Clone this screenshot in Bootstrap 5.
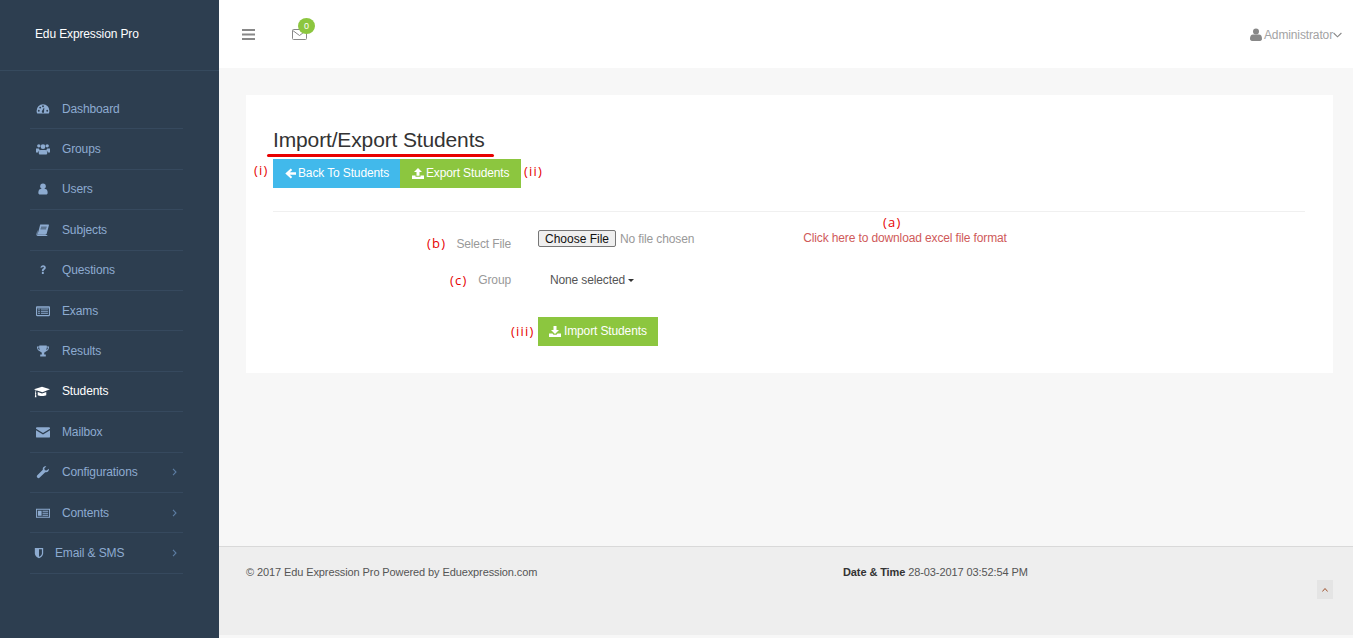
<!DOCTYPE html>
<html lang="en">
<head>
  <meta charset="UTF-8" />
  <meta name="viewport" content="width=device-width, initial-scale=1.0"/>
  <title>Import/Export Students</title>
  <link href="https://cdn.jsdelivr.net/npm/bootstrap@5.3.3/dist/css/bootstrap.min.css" rel="stylesheet"/>
  <style>
    html, body { height: 100%; }
    body { font-family: "Liberation Sans", Arial, sans-serif; font-size: 12px; letter-spacing: -.13px; color: #333; background: #f7f7f7; overflow: hidden; }
    .app-wrap { height: 638px; }
    .side-bar { width: 219px; background: #2d3e50; flex: none; }
    .brand-box { height: 71px; padding: 27px 0 0 35px; color: #fff; font-size: 12px; line-height: 15px; border-bottom: 1px solid #364a5e; }
    .side-menu { margin: 18px 36px 0 30px; padding: 0; list-style: none; }
    .side-menu li { height: 40.4px; border-bottom: 1px solid #36495e; }
    .side-menu a { display: flex; align-items: center; height: 100%; padding-left: 5px; color: #8dabd0; text-decoration: none; line-height: 14px; }
    .side-menu a.is-on { color: #fff; }
    .side-menu svg.mi { width: 14px; height: 14px; flex: none; margin-left: 1px; margin-right: 12px; fill: currentColor; }
    .side-menu a.is-on svg.mi { width: 16px; height: 15px; margin-left: -1px; margin-right: 12px; }
    .side-menu a.short-gap svg.mi { margin-right: 11px; margin-left: -1px; width: 10px; }
    .side-menu .go { margin-left: auto; margin-right: 6px; width: 5px; height: 8px; fill: none; stroke: #5c7da3; stroke-width: 1.1; }
    .top-head { height: 68px; background: #fff; padding: 0 11px 0 23px; color: #888; }
    .menu-ic { width: 13px; height: 11px; fill: #888; }
    .mail-box { margin-left: 37px; width: 15px; height: 11px; margin-top: 1px; }
    .mail-box svg { width: 15px; height: 11px; display: block; }
    .num-pill { position: absolute; top: -11px; left: 6px; width: 17px; height: 16px; border-radius: 50%; background: #8cc63f; color: #fff; font-size: 9px; line-height: 16px; text-align: center; }
    .admin-link { color: #a3a3a3; font-size: 12px; padding-top: 1px; }
    .admin-link svg.who { width: 12px; height: 13px; fill: #888; margin-right: 2px; }
    .admin-link svg.dn { width: 9px; height: 6px; fill: none; stroke: #888; stroke-width: 1.1; }
    .page-area { padding: 27px 20px 0 27px; }
    .white-panel { height: 278px; background: #fff; padding: 32px 28px 0 27px; position: relative; }
    .page-ttl { font-size: 21px; line-height: 26px; font-weight: 400; color: #333; margin: 0 0 6px; letter-spacing: -.14px; }
    .red-line { position: absolute; left: 21px; top: 59px; width: 227px; height: 3px; background: #e80000; border-radius: 2px; }
    .note-red { position: absolute; color: #e60000; line-height: 15px; letter-spacing: 1.2px; font-family: "Open Sans", sans-serif; font-size: 13px; }
    .nt-i { left: 8px; top: 68px; }
    .nt-ii { left: 278px; top: 69px; }
    .nt-a { left: 637px; top: 120px; }
    .nt-b { left: 181px; top: 141px; }
    .nt-c { left: 204px; top: 178px; }
    .nt-iii { left: 265px; top: 229px; }
    .blk-btn { display: inline-flex; align-items: center; height: 29px; border: 0; border-radius: 0; color: #fff; font-size: 12px; line-height: 29px; text-decoration: none; }
    .blk-btn svg { fill: #fff; }
    .btn-sky { background: #41b9eb; width: 127px; padding-left: 12px; }
    .btn-sky svg { width: 11px; height: 11px; margin-right: 2px; }
    .btn-lime { background: #8cc63f; padding-left: 12px; }
    .btn-lime svg { width: 12px; height: 11px; margin-right: 2px; }
    .btn-exp { width: 121px; }
    .btn-imp { width: 120px; margin-left: 27px; padding-left: 11px; }
    .btn-imp svg { margin-right: 3px; }
    .btn-lime:hover, .btn-sky:hover { color: #fff; }
    .thin-rule { border-top: 1px solid #f0f0f0; margin: 23px 0 0; height: 0; }
    .lbl-cell { width: 238px; flex: none; text-align: right; color: #999; }
    .frm-line { display: flex; }
    .row-file { height: 27px; margin-top: 16px; }
    .row-file .lbl-cell { padding-top: 7px; }
    .file-wrap { margin: 2px 0 0 27px; }
    .row-group { height: 20px; margin-top: 16px; }
    .row-import { margin-top: 26px; }
    .file-btn { font-family: "Liberation Sans", Arial, sans-serif; font-size: 12px; letter-spacing: 0; color: #111; background: #efefef; border: 1px solid #767676; border-radius: 2px; height: 17px; width: 78px; padding: 0; line-height: 14px; }
    .file-txt { color: #999; margin-left: 4px; }
    .dl-link { color: #cf5a5a; text-decoration: none; margin-left: 109px; margin-top: -1px; }
    .none-sel { color: #555; margin-left: 39px; }
    .caret-dn { display: inline-block; width: 0; height: 0; border-left: 3px solid transparent; border-right: 3px solid transparent; border-top: 3px solid #333; margin-left: 3px; vertical-align: middle; }
    .foot-bar { height: 89px; background: #eee; border-top: 1px solid #d9d9d9; padding: 18px 0 0 27px; position: relative; color: #555; font-size: 11px; line-height: 14px; margin-top: auto; margin-bottom: 3px; letter-spacing: -.1px; }
    .foot-left { width: 597px; flex: none; }
    .foot-bar b { color: #333; }
    .up-box { position: absolute; right: 20px; top: 33px; width: 16px; height: 19px; background: #e4e4e4; display: flex; align-items: center; justify-content: center; }
    .up-box svg { width: 6px; height: 4px; fill: none; stroke: #a0522d; stroke-width: 1; }
  </style>
</head>
<body>
  <div class="app-wrap d-flex">

    <!-- sidebar -->
    <nav class="side-bar">
      <div class="brand-box">Edu Expression Pro</div>
      <ul class="side-menu">
        <li><a href="#"><svg class="mi" viewBox="0 0 15 14"><path d="M7.5 2A7 7 0 0 0 .6 9.2c0 1 .3 1.9.7 2.6h12.4c.4-.7.7-1.6.7-2.6A7 7 0 0 0 7.500 2zM3 9.900a1 1 0 1 1 0-2 1 1 0 0 1 0 2zm1.500-3.400a1 1 0 1 1 0-2 1 1 0 0 1 0 2zm3-1.400a1 1 0 1 1 0-2 1 1 0 0 1 0 2zm1 5.600a1.300 1.300 0 0 1-2.300-.9l.2-.6 2-3.500.5.1-.3 4zm3.500-.8a1 1 0 1 1 0-2 1 1 0 0 1 0 2z" fill-rule="evenodd"/></svg>Dashboard</a></li>
        <li><a href="#"><svg class="mi" viewBox="0 0 15 14"><circle cx="3" cy="3.600" r="1.800"/><circle cx="12" cy="3.600" r="1.800"/><circle cx="7.500" cy="4.500" r="2.500"/><path d="M0 6.500h3c.3 1 .8 1.500 1.300 1.900-1.200.5-1.800 1.300-2 2.300H0zM15 6.500h-3c-.3 1-.8 1.500-1.300 1.900 1.200.5 1.800 1.300 2 2.300H15zM5 8h5c1.500 0 2 1.500 2 3.500 0 1-.5 1.500-1.500 1.500h-6c-1 0-1.500-.5-1.500-1.500C3 9.500 3.500 8 5 8z"/></svg>Groups</a></li>
        <li><a href="#"><svg class="mi" viewBox="0 0 15 14"><circle cx="7.500" cy="4" r="3"/><path d="M5 7h5c1.500 0 2.500 1.500 2.500 4 0 1.200-.7 2-1.800 2H4.300c-1.100 0-1.800-.8-1.800-2 0-2.500 1-4 2.500-4z"/></svg>Users</a></li>
        <li><a href="#"><svg class="mi" viewBox="0 0 15 14"><path d="M4.500 1H13c.8 0 1 .5.800 1.200l-2.300 8.500c-.2.700-.6 1.300-1.500 1.300H3c-.8 0-1.300-.4-1-1.300zM5.500 3.500h6l-.2.800h-6zM5 5.500h6l-.2.800h-6z" fill-rule="evenodd"/><path d="M1.500 7 .5 11.500c-.2 1 .5 1.800 1.500 1.800h9c.7 0 1.200-.5 1.400-1H2.500c-.7 0-1-.4-.8-1z"/></svg>Subjects</a></li>
        <li><a href="#"><svg class="mi" viewBox="0 0 15 14"><path d="M4.800 4.600C5 2.800 6 1.800 7.700 1.800c1.700 0 2.800 1 2.800 2.500 0 1.300-.7 1.900-1.400 2.400-.6.400-.8.700-.8 1.300H6.300c0-1.200.4-1.900 1.200-2.500.5-.4.900-.7.900-1.300 0-.5-.3-.8-.8-.8s-.8.400-.9 1zM6.300 9h2v2.200h-2z"/></svg>Questions</a></li>
        <li><a href="#"><svg class="mi" viewBox="0 0 15 14"><path d="M1.200 2h12.600c.7 0 1.200.5 1.200 1.200v8.100c0 .7-.5 1.200-1.200 1.200H1.200C.5 12.500 0 12 0 11.300V3.200C0 2.500.5 2 1.200 2zM1.200 3.200v8.100h12.600V3.200zM2.200 4.500h2v1h-2zM5.300 4.500h7.500v1H5.300zM2.200 6.800h2v1h-2zM5.300 6.800h7.500v1H5.300zM2.200 9h2v1h-2zM5.300 9h7.500v1H5.300z" fill-rule="evenodd"/><path d="M1.200 3.200h12.600v1H1.200z"/></svg>Exams</a></li>
        <li><a href="#"><svg class="mi" viewBox="0 0 15 14"><path d="M3.500 1h8v1.300H14c0 3-1.200 4.700-3.500 5.200-.5.700-1 1-1.700 1.200v2h1.700v2.300H4.500v-2.300h1.700v-2c-.7-.2-1.200-.5-1.700-1.200C2.200 7 1 5.300 1 2.300h2.500zM2.200 3.300c.1 1.500.7 2.500 1.800 3-.3-.9-.5-1.900-.5-3zm10.600 0h-1.300c0 1.100-.2 2.100-.5 3 1.100-.5 1.700-1.500 1.800-3z" fill-rule="evenodd"/></svg>Results</a></li>
        <li><a href="#" class="is-on"><svg class="mi" viewBox="0 0 15 14"><path d="M7.500 2.500 0 5l1.600.6C1.400 6.400 1.300 7.200 1.300 8c-.3.2-.4.400-.4.700 0 .2.100.4.300.6l-.4 3h1.500l-.4-3c.2-.2.300-.4.300-.6 0-.3-.1-.5-.4-.7 0-.7.200-1.500.4-2.200l5.700 2L15 5z"/><path d="M3.500 7.500v3c1.200 1 6.800 1 8 0v-3l-4 1.400z"/></svg>Students</a></li>
        <li><a href="#"><svg class="mi" viewBox="0 0 15 14"><path d="M1 2h13c.6 0 1 .4 1 1v.4L7.500 8 0 3.400V3c0-.6.400-1 1-1zM0 5v7c0 .6.400 1 1 1h13c.6 0 1-.4 1-1V5L7.500 9.600z"/></svg>Mailbox</a></li>
        <li><a href="#"><svg class="mi" viewBox="0 0 15 14"><path d="M13.800 3.500c.5 2.300-1.600 4.300-3.900 3.700L4 13c-.8.800-1.900.800-2.600 0s-.7-1.800 0-2.500l5.900-5.800C6.700 2.500 8.700.5 11 1L8.900 3l.5 2 2 .5z"/></svg>Configurations<svg class="go" viewBox="0 0 5 8"><path d="m1 .8 3 3.200-3 3.200"/></svg></a></li>
        <li><a href="#"><svg class="mi" viewBox="0 0 15 14"><path d="M0 2.500h15v9.500H0zM1 3.500V11h13V3.500zM2 4.500h4v5.500H2zM7 4.500h6v1.200H7zM7 6.700h6v1.200H7zM7 8.900h6v1.100H7z" fill-rule="evenodd"/></svg>Contents<svg class="go" viewBox="0 0 5 8"><path d="m1 .8 3 3.200-3 3.200"/></svg></a></li>
        <li><a href="#" class="short-gap"><svg class="mi" viewBox="0 0 12 14"><path d="M1 1h10v6.500c0 2.800-2.700 4.700-5 5.700-2.300-1-5-2.900-5-5.700zM6 2.600v8.900c1.700-.8 3.500-2.200 3.500-4V2.600z" fill-rule="evenodd"/></svg>Email &amp; SMS<svg class="go" viewBox="0 0 5 8"><path d="m1 .8 3 3.200-3 3.200"/></svg></a></li>
      </ul>
    </nav>

    <div class="flex-grow-1 d-flex flex-column">
      <!-- top bar -->
      <header class="top-head d-flex align-items-center">
        <svg class="menu-ic" viewBox="0 0 13 11"><path d="M0 0h13v2H0zM0 4.500h13v2H0zM0 9h13v2H0z"/></svg>
        <div class="mail-box position-relative">
          <svg viewBox="0 0 15 11"><rect x=".5" y=".5" width="14" height="10" rx="1" fill="#fff" stroke="#888"/><path d="m.8 1.500 6.700 5 6.700-5" fill="none" stroke="#888"/></svg>
          <span class="num-pill">0</span>
        </div>
        <a href="#" class="admin-link ms-auto d-flex align-items-center text-decoration-none">
          <svg class="who" viewBox="0 0 12 13"><circle cx="6" cy="3.500" r="3"/><path d="M3 6.500h6c1.800 0 3 1.500 3 4.300 0 1.300-.8 2.200-2 2.200H2c-1.200 0-2-.9-2-2.200 0-2.800 1.200-4.300 3-4.300z"/></svg>Administrator<svg class="dn" viewBox="0 0 9 6"><path d="m.6 1 3.900 3.800L8.400 1"/></svg>
        </a>
      </header>

      <!-- content -->
      <main class="page-area">
        <section class="white-panel">
          <h1 class="page-ttl">Import/Export Students</h1>
          <span class="red-line"></span>
          <span class="note-red nt-i">(i)</span>
          <div class="d-flex">
            <a href="#" class="blk-btn btn-sky"><svg viewBox="0 0 11 11"><path d="M5.800.6 7.200 2 4.800 4.300H11v2.400H4.800l2.400 2.300-1.400 1.400L.3 5.500z"/></svg>Back To Students</a>
            <a href="#" class="blk-btn btn-lime btn-exp"><svg viewBox="0 0 12 11"><path d="M6 0 10 4H7.500v3.800h-3V4H2zM0 7.500h3.500v1.300h5V7.500H12V11H0z"/></svg>Export Students</a>
          </div>
          <span class="note-red nt-ii">(ii)</span>
          <div class="thin-rule"></div>

          <div class="frm-line row-file">
            <div class="lbl-cell">Select File</div>
            <div class="file-wrap d-flex align-items-start">
              <button type="button" class="file-btn">Choose File</button>
              <span class="file-txt">No file chosen</span>
              <a href="#" class="dl-link">Click here to download excel file format</a>
            </div>
          </div>
          <span class="note-red nt-b">(b)</span>
          <span class="note-red nt-a">(a)</span>

          <div class="frm-line row-group">
            <div class="lbl-cell">Group</div>
            <div class="none-sel">None selected<span class="caret-dn"></span></div>
          </div>
          <span class="note-red nt-c">(c)</span>

          <div class="frm-line row-import">
            <div class="lbl-cell"></div>
            <a href="#" class="blk-btn btn-lime btn-imp"><svg viewBox="0 0 12 11"><path d="M4.500 0h3v4H10L6 8 2 4h2.500zM0 7.500h3.500l1 1.300h3l1-1.300H12V11H0z"/></svg>Import Students</a>
          </div>
          <span class="note-red nt-iii">(iii)</span>
        </section>
      </main>

      <!-- footer -->
      <footer class="foot-bar d-flex">
        <div class="foot-left">© 2017 Edu Expression Pro Powered by Eduexpression.com</div>
        <div><b>Date &amp; Time</b> 28-03-2017 03:52:54 PM</div>
        <a href="#" class="up-box"><svg viewBox="0 0 6 4"><path d="m.4 3.500 2.600-3 2.600 3"/></svg></a>
      </footer>
    </div>
  </div>
  <script src="https://cdn.jsdelivr.net/npm/bootstrap@5.3.3/dist/js/bootstrap.bundle.min.js"></script>
</body>
</html>
